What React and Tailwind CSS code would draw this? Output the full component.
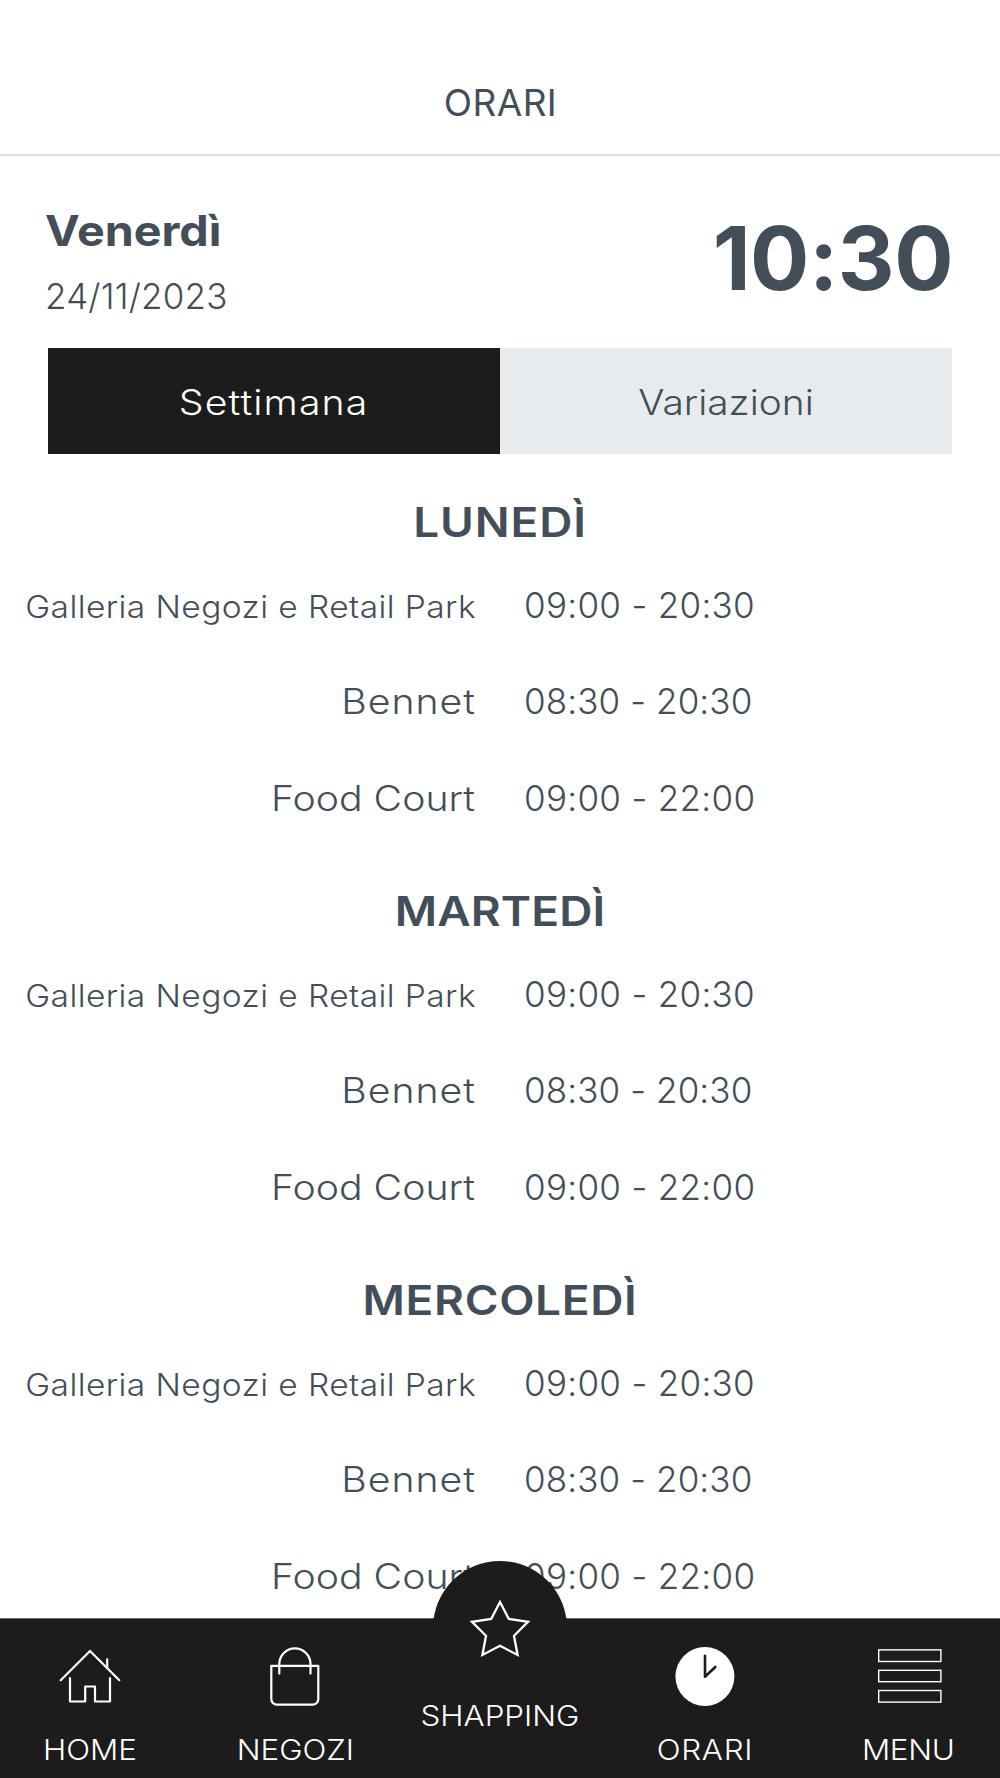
import { useState } from "react"
import clsx from "clsx"

const HOURS = [
  { name: "Galleria Negozi e Retail Park", time: "09:00 - 20:30", small: true },
  { name: "Bennet", time: "08:30 - 20:30" },
  { name: "Food Court", time: "09:00 - 22:00" },
]

const DAYS = [
  { name: "LUNEDÌ", className: "tracking-[0.8px]" },
  { name: "MARTEDÌ", className: "tracking-[0.1px]" },
  { name: "MERCOLEDÌ", className: "tracking-[0.6px]" },
]

const LABEL_SPACING = {
  "Galleria Negozi e Retail Park": "tracking-[0.4px] scale-x-[1.08]",
  Bennet: "tracking-[0.9px] scale-x-[1.12]",
  "Food Court": "scale-x-[1.12] pr-px",
}

function Icon({ children, width = 2.2 }) {
  return (
    <svg
      className="block size-16 shrink-0"
      viewBox="0 0 64 64"
      fill="none"
      stroke="white"
      strokeWidth={width}
      strokeLinecap="round"
      strokeLinejoin="round"
    >
      {children}
    </svg>
  )
}

function HomeIcon() {
  return (
    <Icon>
      <path d="M2.7 36.2 32 7l29.3 29.2" />
      <path d="M49.2 15.3V24" />
      <path d="M12 34v23.5h15.2v-15h9.8v15h15V34" />
    </Icon>
  )
}

function BagIcon() {
  return (
    <Icon>
      <path d="M8.3 21.8h47V55a5.6 5.6 0 0 1-5.6 5.6H13.9A5.6 5.6 0 0 1 8.3 55z" />
      <path d="M16.3 29.6V20a15.6 15.6 0 0 1 31.2 0v9.6" />
    </Icon>
  )
}

function StarIcon() {
  return (
    <Icon width={2.3}>
      <path
        d="M32 6 40.8 23 60 25.8 46 39.8 49.6 59 32 49.8 14.4 59 18 39.8 4 25.8 23.2 23z"
        strokeLinejoin="miter"
        strokeMiterlimit="10"
      />
    </Icon>
  )
}

function ClockIcon() {
  return (
    <Icon width={2.6}>
      <circle cx="31.9" cy="32.5" r="29.5" fill="white" stroke="none" />
      <path d="M32 11.8v21L42.3 23" stroke="#1c1c1c" />
    </Icon>
  )
}

function MenuIcon() {
  return (
    <Icon width={1.4}>
      <g strokeLinejoin="miter">
        <rect x="0.7" y="5.9" width="62.2" height="11.6" />
        <rect x="0.7" y="26.3" width="62.2" height="11.4" />
        <rect x="0.7" y="46.5" width="62.2" height="11.6" />
      </g>
    </Icon>
  )
}

const NAV = [
  { label: "HOME", icon: HomeIcon },
  { label: "NEGOZI", icon: BagIcon },
  { label: "SHAPPING", icon: StarIcon, raised: true },
  { label: "ORARI", icon: ClockIcon, className: "tracking-[0.6px]" },
  { label: "MENU", icon: MenuIcon, className: "tracking-[-0.3px] pr-0.5" },
]

function Day({ day }) {
  return (
    <section className="h-[389px]">
      <h2 className={clsx("text-center text-[41px] leading-[50px] font-semibold mb-[9.5px] scale-x-[1.12]", day.className)}>
        {day.name}
      </h2>
      {HOURS.map((row) => (
        <div key={row.name} className="grid grid-cols-[476px_1fr] gap-12 items-baseline h-[96.6px] leading-[96.6px] text-[35px] font-light whitespace-nowrap">
          <div className={clsx("text-right origin-right", row.small && "text-[31px]", LABEL_SPACING[row.name])}>{row.name}</div>
          <div className={row.name === "Bennet" ? "tracking-[0.1px]" : "tracking-[0.3px]"}>{row.time}</div>
        </div>
      ))}
    </section>
  )
}

function BottomNav() {
  return (
    <nav className="absolute inset-x-0 bottom-0 h-40">
      <div className="absolute left-1/2 -top-[57.5px] size-[134px] -translate-x-1/2 rounded-full bg-[#1c1c1c]" />
      <div className="h-full bg-[#1c1c1c] border-t border-[#6a6a6a]">
        <div className="grid grid-cols-5 -mx-3 pt-[25px]">
          {NAV.map(({ label, icon: NavIcon, className, raised }) => (
            <a
              key={label}
              href="#"
              className={clsx("flex flex-col items-center", raised ? "relative -mt-12 gap-[39px]" : "gap-[25px]")}
            >
              {raised && <span className="absolute top-[22px] left-1/2 h-3 w-[133px] -translate-x-1/2 bg-[#1c1c1c]" />}
              <span className="relative">
                <NavIcon />
              </span>
              <span className={clsx("text-[28px] leading-[34px] font-light text-white scale-x-[1.12]", className)}>{label}</span>
            </a>
          ))}
        </div>
      </div>
    </nav>
  )
}

export default function App() {
  const [tab, setTab] = useState("settimana")

  const tabClass = (name) =>
    clsx(
      "h-full text-[35px] font-light pt-0.5",
      tab === name ? "bg-[#1c1c1c] text-white" : "bg-[#e7ebee] text-[#444e58]"
    )

  return (
    <div className="relative h-[1778px] w-[1000px] overflow-hidden bg-white font-['Inter',sans-serif] text-[#444e58]">
      <header className="h-[156px] border-b-2 border-[#dedede] pt-20 pl-px text-center text-[37px] leading-[46px] tracking-[0.4px]">
        ORARI
      </header>

      <div className="flex justify-between h-48 pt-[50px] pl-[45px] pr-[47px]">
        <div>
          <div className="text-[42px] leading-[50px] font-bold origin-left scale-x-[1.11]">Venerdì</div>
          <div className="mt-[15px] text-[35px] leading-[50px] font-light tracking-[0.2px]">24/11/2023</div>
        </div>
        <div className="mt-0.5 text-[88px] leading-[100px] font-bold tracking-[-0.5px]">10:30</div>
      </div>

      <div className="grid grid-cols-2 mx-12 h-[106px]">
        <button className={tabClass("settimana")} onClick={() => setTab("settimana")}>
          <span className="inline-block scale-x-[1.12] tracking-[1px]">Settimana</span>
        </button>
        <button className={tabClass("variazioni")} onClick={() => setTab("variazioni")}>
          <span className="inline-block scale-x-[1.11]">Variazioni</span>
        </button>
      </div>

      <main className="pt-[43px]">
        {DAYS.map((day) => (
          <Day key={day.name} day={day} />
        ))}
      </main>

      <BottomNav />
    </div>
  )
}
